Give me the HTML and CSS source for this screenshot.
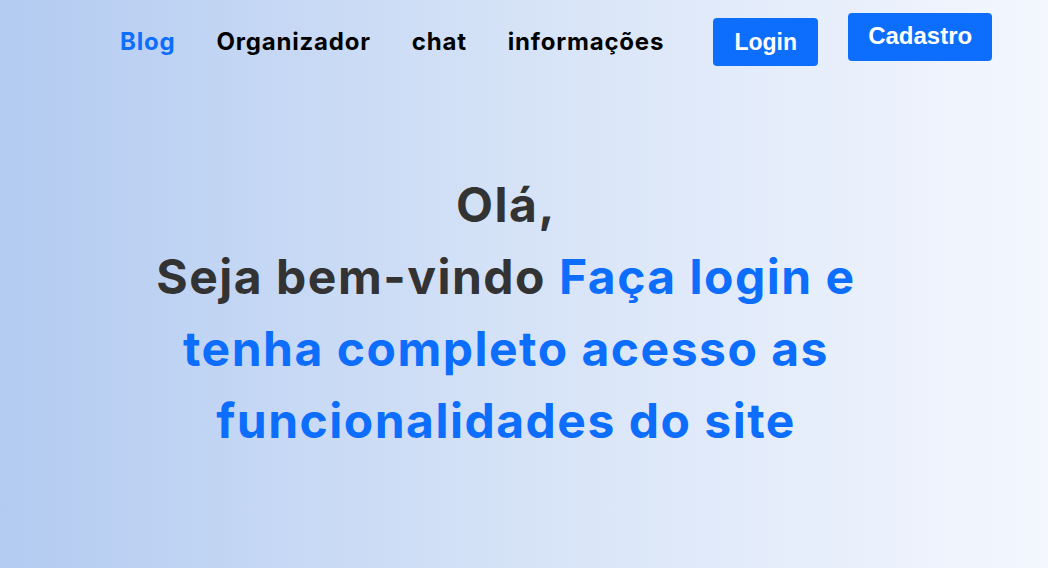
FILE: index.html
```
<!DOCTYPE html>
<html lang="pt-BR">
<head>
<meta charset="utf-8">
<title>Início</title>
<link rel="stylesheet" href="styles.css">
</head>
<body>
<header class="topbar">
  <nav class="menu">
    <a class="menu-link active" href="#">Blog</a>
    <a class="menu-link" href="#">Organizador</a>
    <a class="menu-link" href="#">chat</a>
    <a class="menu-link" href="#">informações</a>
  </nav>
  <a class="btn btn-login" href="#">Login</a>
  <a class="btn btn-signup" href="#">Cadastro</a>
</header>
<main class="hero">
  <h1 class="hero-title">
    <span class="line">Olá,</span>
    <span class="line">Seja bem-vindo <span class="accent">Faça login e</span></span>
    <span class="line accent">tenha completo acesso as</span>
    <span class="line accent">funcionalidades do site</span>
  </h1>
</main>
</body>
</html>
```
FILE: styles.css
```
* { box-sizing: border-box; }
html, body { height: 100%; }
body {
  margin: 0;
  background: linear-gradient(to right, #b3cbf1 0%, #d6e3f7 50%, #f4f7fe 100%);
  font-family: Inter, "Open Sans", sans-serif;
  overflow: hidden;
}
.topbar {
  display: flex;
  align-items: flex-start;
  padding-left: 120px;
  height: 110px;
}
.menu {
  display: flex;
  gap: 41px;
  margin-top: 26px;
}
.menu-link {
  font-family: Inter, sans-serif;
  font-weight: 700;
  font-size: 24px;
  line-height: 32px;
  letter-spacing: 0.8px;
  color: #000;
  text-decoration: none;
}
.menu-link.active { color: #0d6efd; }
.btn {
  display: flex;
  align-items: center;
  justify-content: center;
  height: 48px;
  background: #0d6efd;
  color: #fff;
  border-radius: 4px;
  text-decoration: none;
  font-family: "Liberation Sans", Arial, sans-serif;
  font-weight: 700;
}
.btn-login {
  margin-left: 49px;
  margin-top: 18px;
  width: 105px;
  font-size: 23px;
}
.btn-signup {
  margin-left: 30px;
  margin-top: 13px;
  width: 144px;
  font-size: 24px;
  padding-bottom: 2px;
}
.hero {
  display: flex;
  justify-content: center;
  padding-right: 36px;
  padding-top: 59px;
}
.hero-title {
  margin: 0;
  text-align: center;
  font-family: Inter, sans-serif;
  font-weight: 700;
  font-size: 48px;
  line-height: 72px;
  letter-spacing: 1.5px;
  color: #333333;
}
.line { display: block; white-space: nowrap; }
.accent { color: #0d6efd; }
```
